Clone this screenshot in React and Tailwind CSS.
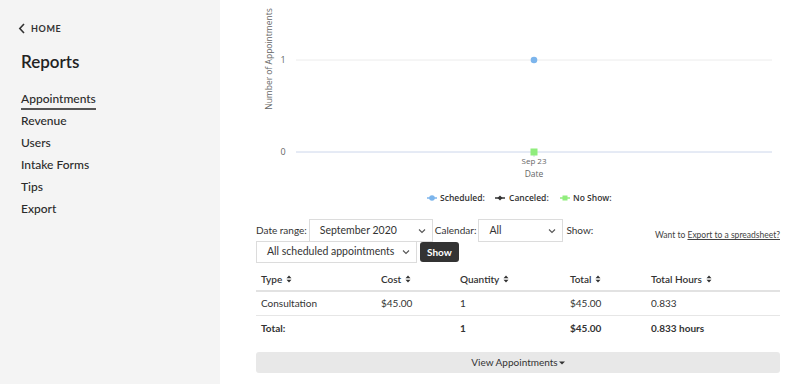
import React from "react";

const menu = ["Appointments", "Revenue", "Users", "Intake Forms", "Tips", "Export"];

function SortIcon() {
  return (
    <svg width="6" height="8" viewBox="0 0 6 8" className="ml-1 inline-block">
      <path d="M3 0.5 L5.5 3.3 H0.5 Z M3 7.5 L5.5 4.7 H0.5 Z" fill="#333" />
    </svg>
  );
}

function Chevron() {
  return (
    <svg width="8" height="6" viewBox="0 0 8 6" className="ml-auto shrink-0">
      <path d="M1 1.5 L4 4.5 L7 1.5" fill="none" stroke="#555" strokeWidth="1.1" />
    </svg>
  );
}

function FakeSelect({ label, className }) {
  return (
    <div
      className={`flex items-center whitespace-nowrap border border-[#dcdcdc] bg-white pl-[10px] pr-[6px] text-[10.5px] text-[#333] ${className}`}
    >
      <span>{label}</span>
      <Chevron />
    </div>
  );
}

function Chart() {
  const font = { fontFamily: "'Open Sans', sans-serif" };
  return (
    <svg width="524" height="216" viewBox="0 0 524 216" style={font} className="block">
      <text
        x="0"
        y="0"
        transform="translate(16 59) rotate(-90)"
        textAnchor="middle"
        fontSize="8.5"
        fill="#666"
      >
        Number of Appointments
      </text>
      <text x="27" y="63" textAnchor="middle" fontSize="9" fill="#666">1</text>
      <text x="27" y="155" textAnchor="middle" fontSize="9" fill="#666">0</text>
      <line x1="40" y1="60" x2="516" y2="60" stroke="#ececec" strokeWidth="1" />
      <line x1="40" y1="152" x2="516" y2="152" stroke="#ccd6eb" strokeWidth="1" />
      <line x1="278" y1="152" x2="278" y2="157" stroke="#ccd6eb" strokeWidth="1" />
      <circle cx="278" cy="60" r="3.3" fill="#7cb5ec" />
      <rect x="274.5" y="148.5" width="7" height="7" fill="#90ed7d" />
      <text x="278" y="163.5" textAnchor="middle" fontSize="8" fill="#666">Sep 23</text>
      <text x="278" y="176.5" textAnchor="middle" fontSize="8.5" fill="#666">Date</text>

      <g fontSize="8.5" fontWeight="600" fill="#333">
        <line x1="171" y1="198" x2="181" y2="198" stroke="#7cb5ec" strokeWidth="1.5" />
        <circle cx="176" cy="198" r="2.8" fill="#7cb5ec" />
        <text x="184" y="201">Scheduled:</text>
        <line x1="239" y1="198" x2="249" y2="198" stroke="#333" strokeWidth="1.5" />
        <path d="M244 195.5 L246.5 198 L244 200.5 L241.5 198 Z" fill="#333" />
        <text x="253" y="201">Canceled:</text>
        <line x1="304" y1="198" x2="314" y2="198" stroke="#90ed7d" strokeWidth="1.5" />
        <rect x="306.5" y="195.5" width="5" height="5" fill="#90ed7d" />
        <text x="317" y="201">No Show:</text>
      </g>
    </svg>
  );
}

export default function App() {
  const cols = ["w-[120px]", "w-[79px]", "w-[110px]", "w-[81px]", "flex-1"];
  const head = ["Type", "Cost", "Quantity", "Total", "Total Hours"];
  const row = ["Consultation", "$45.00", "1", "$45.00", "0.833"];
  const total = ["Total:", "", "1", "$45.00", "0.833 hours"];

  return (
    <div className="flex w-[800px] h-[384px] overflow-hidden bg-white text-[#333] font-['Lato',sans-serif]">
      <aside className="w-[220px] shrink-0 bg-[#f4f4f4] pl-[21px] pt-[22px]">
        <div className="flex items-center gap-[5px] -ml-[3px] text-[9px] font-bold tracking-[0.6px] text-[#333]">
          <svg width="8" height="11" viewBox="0 0 8 11">
            <path d="M6 1 L1.8 5.5 L6 10" fill="none" stroke="#333" strokeWidth="1.6" />
          </svg>
          <span>HOME</span>
        </div>
        <h1 className="mt-[14px] text-[17px] font-semibold leading-[24px] text-[#222]">Reports</h1>
        <nav className="mt-[15px] flex flex-col text-[12px] font-medium text-[#2a2a2a]">
          {menu.map((m, i) => (
            <div key={m} className="h-[22px] leading-[20px]">
              <span className={i === 0 ? "inline-block border-b-2 border-[#555] leading-[18px]" : ""}>{m}</span>
            </div>
          ))}
        </nav>
      </aside>

      <main className="flex-1 pl-[36px] pr-[21px]">
        <Chart />
        <div className="mt-[3px] flex items-center text-[10px] text-[#333]">
          <span className="mr-[2px]">Date range:</span>
          <FakeSelect label="September 2020" className="w-[124px] h-[23px]" />
          <span className="ml-[2px] mr-[2px]">Calendar:</span>
          <FakeSelect label="All" className="w-[85px] h-[23px]" />
          <span className="ml-[3px]">Show:</span>
          <span className="ml-auto mt-[10px] text-[8.5px] text-[#444]">
            Want to <span className="underline">Export to a spreadsheet?</span>
          </span>
        </div>
        <div className="mt-[-1px] flex items-center">
          <FakeSelect label="All scheduled appointments" className="w-[161px] h-[22px]" />
          <button className="ml-[3px] h-[20px] rounded-[3px] bg-[#333] px-[7px] text-[10px] font-bold text-white">
            Show
          </button>
        </div>

        <div className="mt-[5px] text-[10px] text-[#333]">
          <div className="flex h-[24px] items-center border-b-2 border-[#e2e2e2] pl-[5px] font-semibold">
            {head.map((h, i) => (
              <div key={h} className={`${cols[i]} flex items-center`}>
                {h}
                <SortIcon />
              </div>
            ))}
          </div>
          <div className="flex h-[24px] items-center border-b border-[#e6e6e6] pl-[5px]">
            {row.map((c, i) => (
              <div key={i} className={cols[i]}>{c}</div>
            ))}
          </div>
          <div className="flex h-[24px] items-center pl-[5px] font-bold">
            {total.map((c, i) => (
              <div key={i} className={cols[i]}>{c}</div>
            ))}
          </div>
        </div>

        <button className="mt-[12px] flex h-[21px] w-full items-center justify-center rounded-[3px] bg-[#e8e8e8] text-[10px] text-[#333]">
          View Appointments
          <svg width="6" height="4" viewBox="0 0 6 4" className="ml-[1px]">
            <path d="M0 0.5 H6 L3 3.5 Z" fill="#333" />
          </svg>
        </button>
      </main>
    </div>
  );
}
